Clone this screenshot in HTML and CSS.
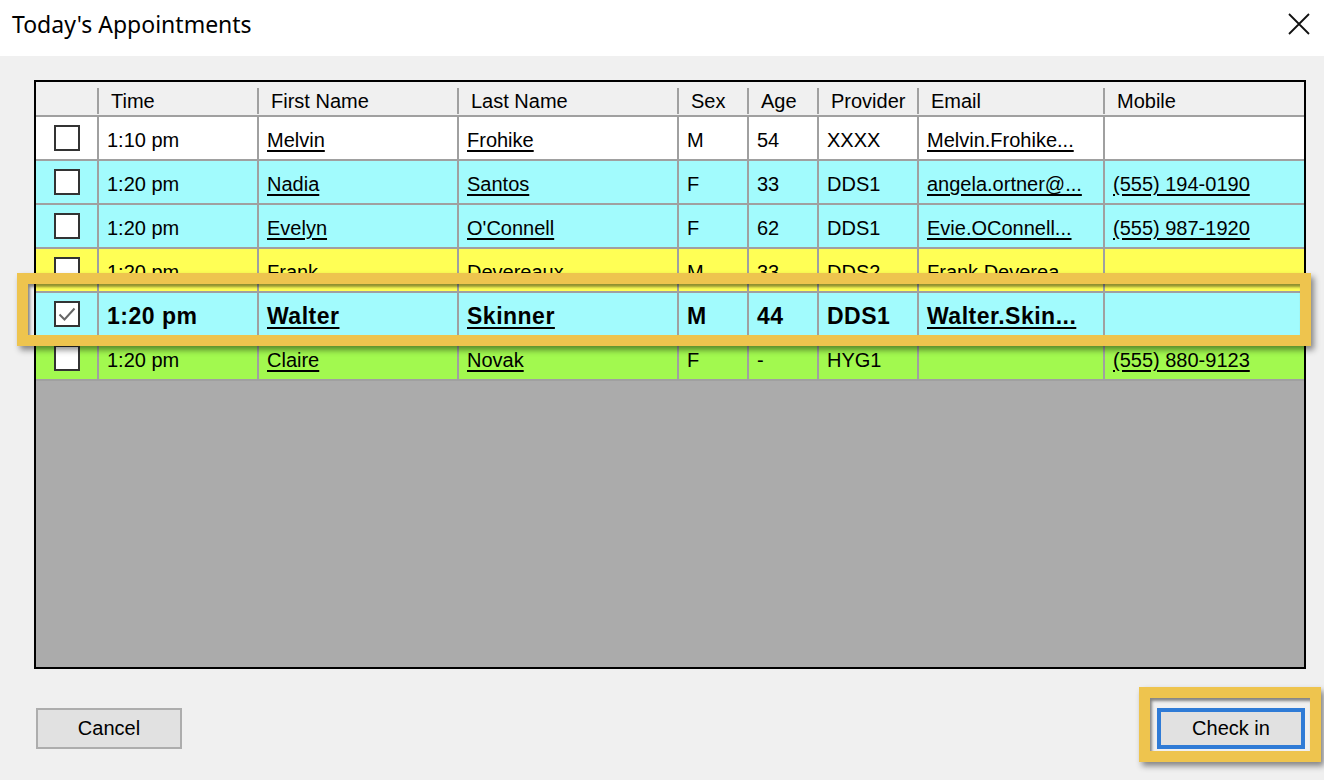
FILE: index.html
```html
<!DOCTYPE html>
<html>
<head>
<meta charset="utf-8">
<title>Today's Appointments</title>
<link rel="stylesheet" href="styles.css">
</head>
<body>
<div class="titlebar">
  <div class="title">Today's Appointments</div>
  <svg class="close" width="24" height="24" viewBox="0 0 24 24"><path d="M2 2 L22 22 M22 2 L2 22" stroke="#111" stroke-width="1.8" fill="none"/></svg>
</div>
<div class="content">
  <div class="grid">
    <div class="row head">
      <div class="hc first"></div>
      <div class="hc">Time</div>
      <div class="hc">First Name</div>
      <div class="hc">Last Name</div>
      <div class="hc">Sex</div>
      <div class="hc">Age</div>
      <div class="hc">Provider</div>
      <div class="hc">Email</div>
      <div class="hc">Mobile</div>
    </div>
    <div class="row white">
      <div class="c cb"><span class="box"></span></div>
      <div class="c">1:10 pm</div>
      <div class="c"><u>Melvin</u></div>
      <div class="c"><u>Frohike</u></div>
      <div class="c">M</div>
      <div class="c">54</div>
      <div class="c">XXXX</div>
      <div class="c"><u>Melvin.Frohike...</u></div>
      <div class="c"></div>
    </div>
    <div class="row cyan">
      <div class="c cb"><span class="box"></span></div>
      <div class="c">1:20 pm</div>
      <div class="c"><u>Nadia</u></div>
      <div class="c"><u>Santos</u></div>
      <div class="c">F</div>
      <div class="c">33</div>
      <div class="c">DDS1</div>
      <div class="c"><u>angela.ortner@...</u></div>
      <div class="c"><u>(555) 194-0190</u></div>
    </div>
    <div class="row cyan">
      <div class="c cb"><span class="box"></span></div>
      <div class="c">1:20 pm</div>
      <div class="c"><u>Evelyn</u></div>
      <div class="c"><u>O'Connell</u></div>
      <div class="c">F</div>
      <div class="c">62</div>
      <div class="c">DDS1</div>
      <div class="c"><u>Evie.OConnell...</u></div>
      <div class="c"><u>(555) 987-1920</u></div>
    </div>
    <div class="row yellow">
      <div class="c cb"><span class="box"></span></div>
      <div class="c">1:20 pm</div>
      <div class="c"><u>Frank</u></div>
      <div class="c"><u>Devereaux</u></div>
      <div class="c">M</div>
      <div class="c">33</div>
      <div class="c">DDS2</div>
      <div class="c"><u>Frank.Deverea...</u></div>
      <div class="c"></div>
    </div>
    <div class="row cyan bold">
      <div class="c cb"><span class="box"><svg width="22" height="22" viewBox="0 0 22 22"><path d="M3.5 11.5 L8.5 16.5 L18.5 5.5" stroke="#666" stroke-width="2" fill="none"/></svg></span></div>
      <div class="c">1:20 pm</div>
      <div class="c"><u>Walter</u></div>
      <div class="c"><u>Skinner</u></div>
      <div class="c">M</div>
      <div class="c">44</div>
      <div class="c">DDS1</div>
      <div class="c"><u>Walter.Skin...</u></div>
      <div class="c"></div>
    </div>
    <div class="row green">
      <div class="c cb"><span class="box"></span></div>
      <div class="c">1:20 pm</div>
      <div class="c"><u>Claire</u></div>
      <div class="c"><u>Novak</u></div>
      <div class="c">F</div>
      <div class="c">-</div>
      <div class="c">HYG1</div>
      <div class="c"></div>
      <div class="c"><u>(555) 880-9123</u></div>
    </div>
  </div>
  <div class="footer">
    <button class="btn cancel">Cancel</button>
    <button class="btn checkin">Check in</button>
  </div>
</div>
<div class="frame frame-row"></div>
<div class="frame frame-btn"></div>
</body>
</html>
```
FILE: styles.css
```css
html, body {
  margin: 0;
  padding: 0;
}
body {
  width: 1324px;
  height: 780px;
  overflow: hidden;
  background: #f0f0f0;
  font-family: "Liberation Sans", Arial, sans-serif;
  color: #000;
  position: relative;
}
.titlebar {
  height: 56px;
  background: #fff;
  display: flex;
  align-items: center;
  justify-content: space-between;
  padding: 0 12px 8px 12px;
  box-sizing: border-box;
}
.title {
  font-family: "Noto Sans", "Open Sans", sans-serif;
  font-size: 23px;
  color: #000;
}
.close {
  margin-right: 1px;
}
.content {
  padding: 24px 18px 0 34px;
}
.grid {
  height: 589px;
  border: 2px solid #000;
  background: #ababab;
  box-sizing: border-box;
}
.row {
  display: grid;
  grid-template-columns: 61px 160px 200px 220px 70px 70px 100px 186px 1fr;
  height: 44px;
  border-bottom: 2px solid #a0a0a0;
  box-sizing: border-box;
}
.row.head {
  height: 35px;
  background: #f0f0f0;
}
.hc {
  margin-top: 6px;
  height: 26px;
  line-height: 26px;
  border-left: 2px solid #a0a0a0;
  padding-left: 12px;
  font-size: 20px;
  white-space: nowrap;
}
.hc.first {
  border-left: none;
}
.c {
  border-left: 2px solid #a0a0a0;
  padding-left: 8px;
  font-size: 20px;
  line-height: 46px;
  white-space: nowrap;
  overflow: hidden;
}
.c.cb {
  border-left: none;
  padding-left: 0;
  display: flex;
  align-items: center;
  justify-content: center;
}
.c u {
  text-decoration-thickness: 2px;
  text-underline-offset: 3px;
}
.box {
  width: 26px;
  height: 26px;
  box-sizing: border-box;
  border: 2px solid #333;
  background: #fff;
  display: flex;
  align-items: center;
  justify-content: center;
}
.white { background: #ffffff; }
.cyan { background: #a2fbfd; }
.yellow { background: #ffff55; }
.green { background: #a2f94f; }
.bold .c {
  font-weight: bold;
  font-size: 23px;
  letter-spacing: 0.5px;
}
.footer {
  display: flex;
  justify-content: space-between;
  padding: 39px 1px 0 2px;
}
.btn {
  height: 41px;
  background: #e1e1e1;
  font-family: "Liberation Sans", Arial, sans-serif;
  font-size: 20px;
  color: #000;
  box-sizing: border-box;
  padding: 0;
}
.cancel {
  width: 146px;
  border: 2px solid #adadad;
}
.checkin {
  width: 148px;
  border: 4px solid #2f7bd6;
}
.frame {
  position: absolute;
  box-sizing: border-box;
  border: 11px solid #eec44e;
  box-shadow: 3px 4px 6px rgba(0,0,0,0.45), inset 2px 3px 3px rgba(0,0,0,0.45);
  pointer-events: none;
}
.frame-row {
  left: 17px;
  top: 273px;
  width: 1294px;
  height: 73px;
}
.frame-btn {
  left: 1139px;
  top: 687px;
  width: 182px;
  height: 75px;
}
```
